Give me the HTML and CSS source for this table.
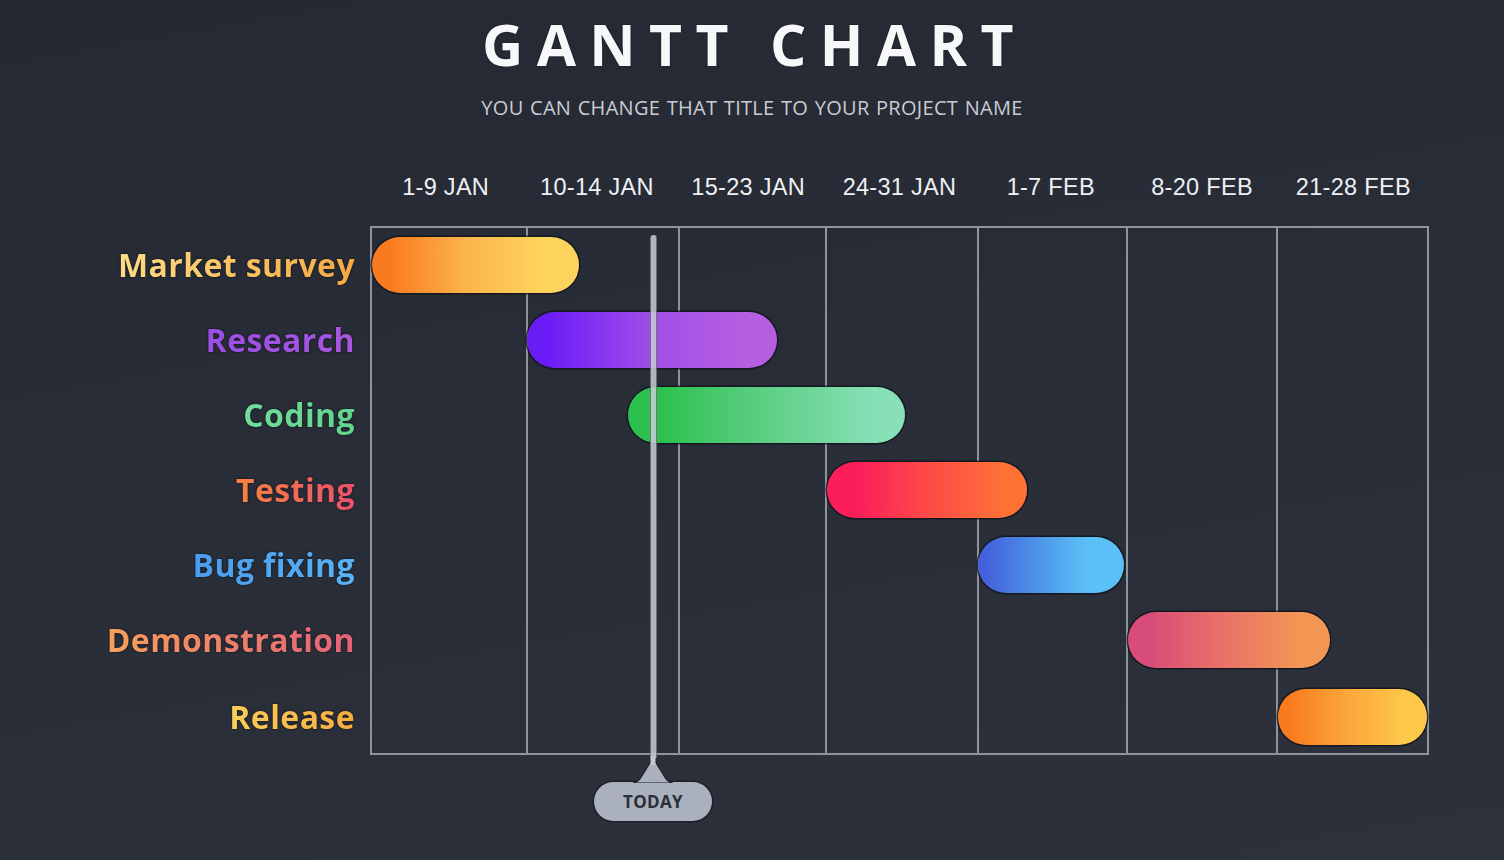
FILE: index.html
```html
<!DOCTYPE html>
<html lang="en">
<head>
<meta charset="utf-8">
<title>Gantt Chart</title>
<link rel="stylesheet" href="styles.css">
</head>
<body>
<main class="page">
  <h1 class="title">GANTT CHART</h1>
  <p class="subtitle">YOU CAN CHANGE THAT TITLE TO YOUR PROJECT NAME</p>

  <section class="chart">
    <div class="dates">
      <span>1-9 JAN</span>
      <span>10-14 JAN</span>
      <span>15-23 JAN</span>
      <span>24-31 JAN</span>
      <span>1-7 FEB</span>
      <span>8-20 FEB</span>
      <span>21-28 FEB</span>
    </div>

    <ul class="labels">
      <li><span class="label l-market">Market survey</span></li>
      <li><span class="label l-research">Research</span></li>
      <li><span class="label l-coding">Coding</span></li>
      <li><span class="label l-testing">Testing</span></li>
      <li><span class="label l-bug">Bug fixing</span></li>
      <li><span class="label l-demo">Demonstration</span></li>
      <li><span class="label l-release">Release</span></li>
    </ul>

    <div class="plot">
      <div class="col c1"></div>
      <div class="col c2"></div>
      <div class="col c3"></div>
      <div class="col c4"></div>
      <div class="col c5"></div>
      <div class="col c6"></div>
      <div class="col c7"></div>

      <div class="row r1"><span class="bar b-market" style="margin-left:0px;width:207px"></span></div>
      <div class="row r2"><span class="bar b-research" style="margin-left:155px;width:250px"></span></div>
      <div class="row r3"><span class="bar b-coding" style="margin-left:256px;width:277px"></span></div>
      <div class="row r4"><span class="bar b-testing" style="margin-left:455px;width:200px"></span></div>
      <div class="row r5"><span class="bar b-bug" style="margin-left:606px;width:146px"></span></div>
      <div class="row r6"><span class="bar b-demo" style="margin-left:756px;width:202px"></span></div>
      <div class="row r7"><span class="bar b-release" style="margin-left:906px;width:149px"></span></div>

      <div class="today">
        <div class="today-line"></div>
        <svg class="today-tip" width="40" height="27" viewBox="0 0 40 27" aria-hidden="true">
          <path d="M20 2 L7 23 C5.5 25.3 3 26.5 0 27 L40 27 C37 26.5 34.5 25.3 33 23 Z" fill="#aab1bc" stroke="#1b1f27" stroke-width="1.2" stroke-linejoin="round"/>
          <rect x="17.5" y="0" width="5" height="9" fill="#c3c8d0"/>
        </svg>
        <div class="today-badge">TODAY</div>
      </div>
    </div>
  </section>
</main>
</body>
</html>
```

FILE: styles.css
```css
* { box-sizing: border-box; }

html, body {
  margin: 0;
  padding: 0;
}

body {
  background: #272c37;
  font-family: "Open Sans", "Liberation Sans", sans-serif;
}

.page {
  width: 1504px;
  height: 860px;
  overflow: hidden;
  display: flex;
  flex-direction: column;
  align-items: center;
  padding-top: 16px;
  background: linear-gradient(170deg, #242933 0%, #282d38 50%, #2c313c 100%);
}

.title {
  margin: 0 -13px 0 -8px;
  font: 700 57px/1 "Open Sans", sans-serif;
  letter-spacing: 13.4px;
  color: #f7f8fa;
  text-shadow: 0 0 2px rgba(0, 0, 0, 0.6);
}

.subtitle {
  margin: 25px 0 0;
  font: 400 20px/1 "Open Sans", sans-serif;
  color: #c8ccd3;
  letter-spacing: 0.3px;
  word-spacing: 1px;
}

.chart {
  align-self: flex-start;
  margin-top: 58px;
  display: grid;
  grid-template-columns: 370px 1059px;
  grid-template-rows: auto auto;
}

.dates {
  grid-column: 2;
  grid-row: 1;
  display: grid;
  grid-template-columns: repeat(7, 1fr);
  margin-bottom: 26px;
  font: 400 23.5px/1 "Liberation Sans", Arial, sans-serif;
  letter-spacing: 0.3px;
  color: #eef0f3;
  text-align: center;
}

.labels {
  grid-column: 1;
  grid-row: 2;
  list-style: none;
  margin: 0;
  padding: 2px 15px 0 0;
  display: grid;
  grid-template-rows: repeat(7, 75px);
}

.labels li {
  display: flex;
  align-items: center;
  justify-content: flex-end;
}

.label {
  font: 700 32px/1 "Open Sans", sans-serif;
  letter-spacing: 0.4px;
  color: transparent;
  -webkit-background-clip: text;
  background-clip: text;
  padding: 6px 0;
  filter: drop-shadow(0 0 1px rgba(10, 12, 16, 0.9));
}

.l-market  { background-image: linear-gradient(90deg, #fddc85, #f6a943); }
.l-research{ background-image: linear-gradient(90deg, #9a4ee4, #a956e0); }
.l-coding  { background-image: linear-gradient(90deg, #72de9c, #5fd48b); }
.l-testing { background-image: linear-gradient(90deg, #f6843f, #ee4f6d); }
.l-bug     { background-image: linear-gradient(90deg, #4a9cec, #5ab2f5); }
.l-demo    { background-image: linear-gradient(90deg, #f7a058, #e5607b); }
.l-release { background-image: linear-gradient(90deg, #fbcd5a, #f7ad3e); }

.plot {
  grid-column: 2;
  grid-row: 2;
  position: relative;
  height: 529px;
  border: 2px solid #8e939c;
  display: grid;
  grid-template-columns: 154px 152px 147px 152px 149px 150px 151px;
  grid-template-rows: repeat(7, 75px);
}

.col {
  grid-row: 1 / -1;
  border-left: 2px solid #8e939c;
}
.c1 { grid-column: 1; border-left: 0; }
.c2 { grid-column: 2; }
.c3 { grid-column: 3; }
.c4 { grid-column: 4; }
.c5 { grid-column: 5; }
.c6 { grid-column: 6; }
.c7 { grid-column: 7; }

.row {
  grid-column: 1 / -1;
  display: flex;
  align-items: center;
}
.r1 { grid-row: 1; }
.r2 { grid-row: 2; }
.r3 { grid-row: 3; }
.r4 { grid-row: 4; }
.r5 { grid-row: 5; }
.r6 { grid-row: 6; }
.r7 { grid-row: 7; padding-top: 3px; }
.labels li:last-child { padding-top: 3px; }

.bar {
  display: block;
  height: 56px;
  border-radius: 28px;
  box-shadow: 0 0 0 1.5px rgba(16, 18, 24, 0.75);
}

.b-market  { background: linear-gradient(90deg, #f97a1f 8%, #fcb44a 45%, #fdd35c 80%); }
.b-research{ background: linear-gradient(90deg, #6a1cf6 8%, #a14ee8 50%, #b55ee0 85%); }
.b-coding  { background: linear-gradient(90deg, #2cc14f 12%, #58cd7e 45%, #88e0b8 90%); }
.b-testing { background: linear-gradient(90deg, #fb1e5a 15%, #fd4a48 50%, #fe7334 90%); }
.b-bug     { background: linear-gradient(90deg, #4461dc 5%, #4d93e8 40%, #5ac0f6 75%); }
.b-demo    { background: linear-gradient(90deg, #d84c7a 10%, #e87068 45%, #f39653 85%); }
.b-release { background: linear-gradient(90deg, #f97b1d 8%, #fca53a 45%, #fdc84a 85%); }

.today {
  position: absolute;
  left: 222px;
  top: 7px;
  width: 118px;
  height: 586px;
  display: flex;
  flex-direction: column;
  align-items: center;
  z-index: 2;
}

.today-line {
  flex: 1;
  width: 7px;
  border-radius: 3px 3px 0 0;
  background: rgba(200, 205, 213, 0.85);
  border-left: 1px solid rgba(20, 22, 28, 0.45);
  border-right: 1px solid rgba(20, 22, 28, 0.45);
}

.today-tip {
  display: block;
  flex: none;
  margin-top: -2px;
  margin-bottom: -1px;
  position: relative;
  z-index: 1;
}

.today-badge {
  flex: none;
  width: 118px;
  height: 39px;
  border-radius: 20px;
  background: #aab1bc;
  box-shadow: 0 0 0 1.5px #1b1f27;
  display: flex;
  align-items: center;
  justify-content: center;
  font: 700 17px/1 "Open Sans", sans-serif;
  color: #2a2f3a;
  letter-spacing: 0.3px;
}
```
